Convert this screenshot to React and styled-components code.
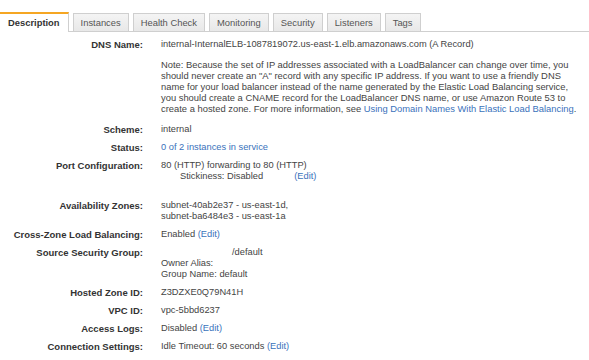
import React from "react";
import styled, { createGlobalStyle } from "styled-components";

const GlobalStyle = createGlobalStyle`
  body {
    margin: 0;
    background: #fff;
    font-family: "Liberation Sans", Arial, sans-serif;
  }
`;

const tabs = ["Description", "Instances", "Health Check", "Monitoring", "Security", "Listeners", "Tags"];

function App() {
  return (
    <Page>
      <GlobalStyle />
      <TabBar>
        {tabs.map((t, i) => (
          <Tab key={t} $active={i === 0}>{t}</Tab>
        ))}
      </TabBar>
      <Details>
        <Row>
          <Label>DNS Name:</Label>
          <Value>internal-InternalELB-1087819072.us-east-1.elb.amazonaws.com (A Record)</Value>
        </Row>
        <Row $top={2}>
          <Label />
          <Value $size={9.4}>
            Note: Because the set of IP addresses associated with a LoadBalancer can change over time, you<br />
            should never create an "A" record with any specific IP address. If you want to use a friendly DNS<br />
            name for your load balancer instead of the name generated by the Elastic Load Balancing service,<br />
            you should create a CNAME record for the LoadBalancer DNS name, or use Amazon Route 53 to<br />
            create a hosted zone. For more information, see <Link>Using Domain Names With Elastic Load Balancing</Link>.
          </Value>
        </Row>
        <Row $top={3}>
          <Label>Scheme:</Label>
          <Value>internal</Value>
        </Row>
        <Row>
          <Label>Status:</Label>
          <Value><Link>0 of 2 instances in service</Link></Value>
        </Row>
        <Row>
          <Label>Port Configuration:</Label>
          <Value>
            80 (HTTP) forwarding to 80 (HTTP)
            <SubLine>Stickiness: Disabled<Link $gap={31}>(Edit)</Link></SubLine>
          </Value>
        </Row>
        <Row $top={11}>
          <Label>Availability Zones:</Label>
          <Value>
            subnet-40ab2e37 - us-east-1d,<br />
            subnet-ba6484e3 - us-east-1a
          </Value>
        </Row>
        <Row>
          <Label>Cross-Zone Load Balancing:</Label>
          <Value>Enabled <Link>(Edit)</Link></Value>
        </Row>
        <Row>
          <Label>Source Security Group:</Label>
          <Value>
            <Blank />/default<br />
            Owner Alias: <br />
            Group Name: default
          </Value>
        </Row>
        <Row>
          <Label>Hosted Zone ID:</Label>
          <Value>Z3DZXE0Q79N41H</Value>
        </Row>
        <Row>
          <Label>VPC ID:</Label>
          <Value>vpc-5bbd6237</Value>
        </Row>
        <Row>
          <Label>Access Logs:</Label>
          <Value>Disabled <Link>(Edit)</Link></Value>
        </Row>
        <Row>
          <Label>Connection Settings:</Label>
          <Value>Idle Timeout: 60 seconds <Link>(Edit)</Link></Value>
        </Row>
      </Details>
    </Page>
  );
}

const Page = styled.div`
  padding-top: 12px;
  width: 589px;
`;

const TabBar = styled.div`
  display: flex;
  align-items: flex-end;
  gap: 4px;
  height: 19px;
  border-bottom: 1px solid #cfcfcf;
`;

const Tab = styled.div`
  box-sizing: border-box;
  height: ${(p) => (p.$active ? "20px" : "18px")};
  margin-bottom: ${(p) => (p.$active ? "-1px" : "0")};
  padding: 0 ${(p) => (p.$active ? "8px" : "7px")};
  display: flex;
  align-items: center;
  font-size: 9.4px;
  color: ${(p) => (p.$active ? "#333" : "#555")};
  font-weight: ${(p) => (p.$active ? "bold" : "normal")};
  background: ${(p) => (p.$active ? "#fff" : "linear-gradient(#f4f4f4, #e8e8e8)")};
  border: 1px solid #cfcfcf;
  border-bottom: ${(p) => (p.$active ? "none" : "0")};
  border-top: ${(p) => (p.$active ? "2px solid #f5a623" : "1px solid #cfcfcf")};
  border-left: ${(p) => (p.$active ? "none" : "1px solid #cfcfcf")};
  padding-bottom: ${(p) => (p.$active ? "1px" : "0")};
`;

const Details = styled.div`
  display: flex;
  flex-direction: column;
  gap: 7px;
  padding-top: 7px;
`;

const Row = styled.div`
  display: grid;
  grid-template-columns: 143px 1fr;
  column-gap: 18px;
  margin-top: ${(p) => p.$top || 0}px;
  line-height: 11px;
`;

const Label = styled.div`
  text-align: right;
  font-weight: bold;
  font-size: 9.5px;
  color: #333;
  white-space: nowrap;
`;

const Value = styled.div`
  font-size: ${(p) => p.$size || 9.3}px;
  color: #444;
  white-space: nowrap;
`;

const Link = styled.span`
  color: #3a72bb;
  margin-left: ${(p) => p.$gap || 0}px;
`;

const SubLine = styled.div`
  padding-left: 19px;
`;

const Blank = styled.span`
  display: inline-block;
  width: 71px;
`;

export default App;
